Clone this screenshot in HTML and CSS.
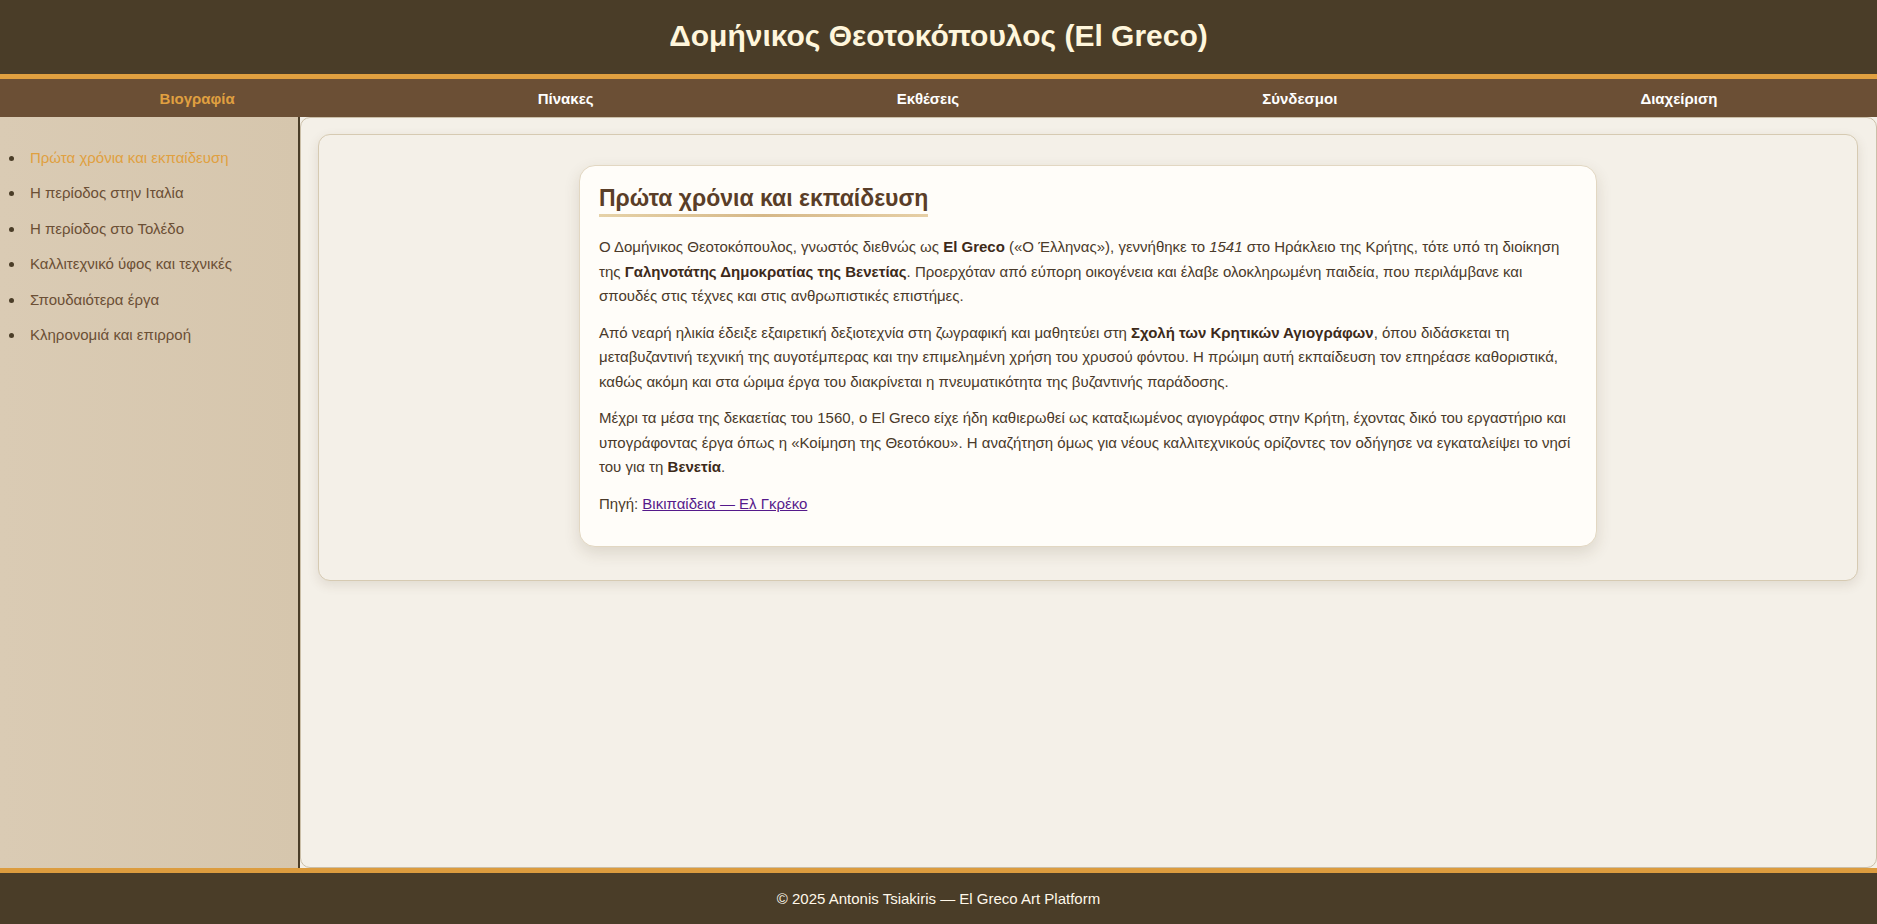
FILE: index.html
```html
<!DOCTYPE html>
<html lang="el">
<head>
<meta charset="utf-8">
<title>El Greco</title>
<link rel="stylesheet" href="styles.css">
</head>
<body>
<div class="page">
  <header class="site-header">
    <h1 class="site-title">Δομήνικος Θεοτοκόπουλος (El Greco)</h1>
  </header>
  <nav class="top-nav">
    <a href="#" class="nav-link active">Βιογραφία</a>
    <a href="#" class="nav-link">Πίνακες</a>
    <a href="#" class="nav-link">Εκθέσεις</a>
    <a href="#" class="nav-link">Σύνδεσμοι</a>
    <a href="#" class="nav-link">Διαχείριση</a>
  </nav>
  <div class="layout">
    <aside class="sidebar">
      <ul class="side-list">
        <li><a href="#" class="side-link active">Πρώτα χρόνια και εκπαίδευση</a></li>
        <li><a href="#" class="side-link">Η περίοδος στην Ιταλία</a></li>
        <li><a href="#" class="side-link">Η περίοδος στο Τολέδο</a></li>
        <li><a href="#" class="side-link">Καλλιτεχνικό ύφος και τεχνικές</a></li>
        <li><a href="#" class="side-link">Σπουδαιότερα έργα</a></li>
        <li><a href="#" class="side-link">Κληρονομιά και επιρροή</a></li>
      </ul>
    </aside>
    <main class="main">
      <section class="panel">
        <article class="card">
          <h2 class="card-title">Πρώτα χρόνια και εκπαίδευση</h2>
          <p>Ο Δομήνικος Θεοτοκόπουλος, γνωστός διεθνώς ως <strong>El Greco</strong> («Ο Έλληνας»), γεννήθηκε το <em>1541</em> στο Ηράκλειο της Κρήτης, τότε υπό τη διοίκηση της <strong>Γαληνοτάτης Δημοκρατίας της Βενετίας</strong>. Προερχόταν από εύπορη οικογένεια και έλαβε ολοκληρωμένη παιδεία, που περιλάμβανε και σπουδές στις τέχνες και στις ανθρωπιστικές επιστήμες.</p>
          <p>Από νεαρή ηλικία έδειξε εξαιρετική δεξιοτεχνία στη ζωγραφική και μαθητεύει στη <strong>Σχολή των Κρητικών Αγιογράφων</strong>, όπου διδάσκεται τη μεταβυζαντινή τεχνική της αυγοτέμπερας και την επιμελημένη χρήση του χρυσού φόντου. Η πρώιμη αυτή εκπαίδευση τον επηρέασε καθοριστικά, καθώς ακόμη και στα ώριμα έργα του διακρίνεται η πνευματικότητα της βυζαντινής παράδοσης.</p>
          <p>Μέχρι τα μέσα της δεκαετίας του 1560, ο El Greco είχε ήδη καθιερωθεί ως καταξιωμένος αγιογράφος στην Κρήτη, έχοντας δικό του εργαστήριο και υπογράφοντας έργα όπως η «Κοίμηση της Θεοτόκου». Η αναζήτηση όμως για νέους καλλιτεχνικούς ορίζοντες τον οδήγησε να εγκαταλείψει το νησί του για τη <strong>Βενετία</strong>.</p>
          <p>Πηγή: <a href="#" class="source-link">Βικιπαίδεια — Ελ Γκρέκο</a></p>
        </article>
      </section>
    </main>
  </div>
  <footer class="site-footer">© 2025 Antonis Tsiakiris — El Greco Art Platform</footer>
</div>
</body>
</html>
```

FILE: styles.css
```css
* { box-sizing: border-box; }
html, body { margin: 0; padding: 0; }
body {
  font-family: "Liberation Sans", Arial, sans-serif;
  background: #f4f0e8;
  color: #4a3a2a;
}
.page {
  min-height: 100vh;
  display: flex;
  flex-direction: column;
}
.site-header {
  background: #4a3d28;
  border-bottom: 5px solid #e0a040;
  padding: 19px 0 21px;
  text-align: center;
}
.site-title {
  margin: 0;
  font-size: 30px;
  line-height: 34px;
  font-weight: bold;
  color: #fff6dc;
}
.top-nav {
  background: #6b4f35;
  display: flex;
  justify-content: space-around;
  padding: 11px 8px 9px;
}
.nav-link {
  color: #ffffff;
  font-size: 15px;
  line-height: 18px;
  font-weight: bold;
  text-decoration: none;
}
.nav-link.active { color: #e0a040; }
.layout {
  flex: 1;
  display: flex;
}
.sidebar {
  width: 300px;
  flex-shrink: 0;
  background: linear-gradient(to right, #dacbb4, #d6c6ad);
  border-right: 2px solid #4a3d28;
  padding-top: 10px;
}
.side-list {
  margin: 0;
  padding: 0 0 0 7px;
  list-style: none;
  color: #4a3d28;
  font-size: 15px;
}
.side-list li {
  display: flex;
  padding: 8.75px 0;
  line-height: 18px;
}
.side-list li::before {
  content: "";
  flex: 0 0 5px;
  width: 5px;
  height: 5px;
  margin: 7px 16px 0 2px;
  border-radius: 50%;
  background: #4a3d28;
}
.side-list li:first-child { margin-top: 13px; }
.side-link {
  color: #6b4f35;
  text-decoration: none;
}
.side-link.active { color: #e0a040; }
.main {
  flex: 1;
  background: #f4f0e8;
  border: 1px solid #cbbfa8;
  border-radius: 10px;
  padding: 16px 18px 18px 17px;
}
.panel {
  background: #f4f0e8;
  border: 1px solid #d6cab2;
  border-radius: 12px;
  box-shadow: 0 4px 12px rgba(80, 60, 30, 0.12);
  padding: 30px 20px 33px;
}
.card {
  max-width: 1018px;
  margin: 0 auto;
  background: #fffdf9;
  border: 1px solid #e2d7c2;
  border-radius: 16px;
  box-shadow: 0 6px 16px rgba(80, 60, 30, 0.14);
  padding: 19px 19px 18px;
}
.card-title {
  display: inline-block;
  margin: 0 0 18px;
  font-size: 23px;
  line-height: 27px;
  font-weight: bold;
  color: #5a3e28;
  padding-bottom: 2px;
  border-bottom: 3px solid transparent;
  border-image: linear-gradient(to right, #e6d2a8, #d6b888, #e6cfa6) 1;
}
.card p {
  margin: 0 0 12px;
  font-size: 15px;
  line-height: 24.5px;
  color: #4a3a2a;
}
.card strong { color: #3d2a1a; }
.source-link { color: #551a8b; }
.site-footer {
  background: #4a3d28;
  border-top: 5px solid #dc9c3e;
  color: #fff8ea;
  text-align: center;
  font-size: 15px;
  line-height: 18px;
  padding: 17px 0 16px;
}
```
